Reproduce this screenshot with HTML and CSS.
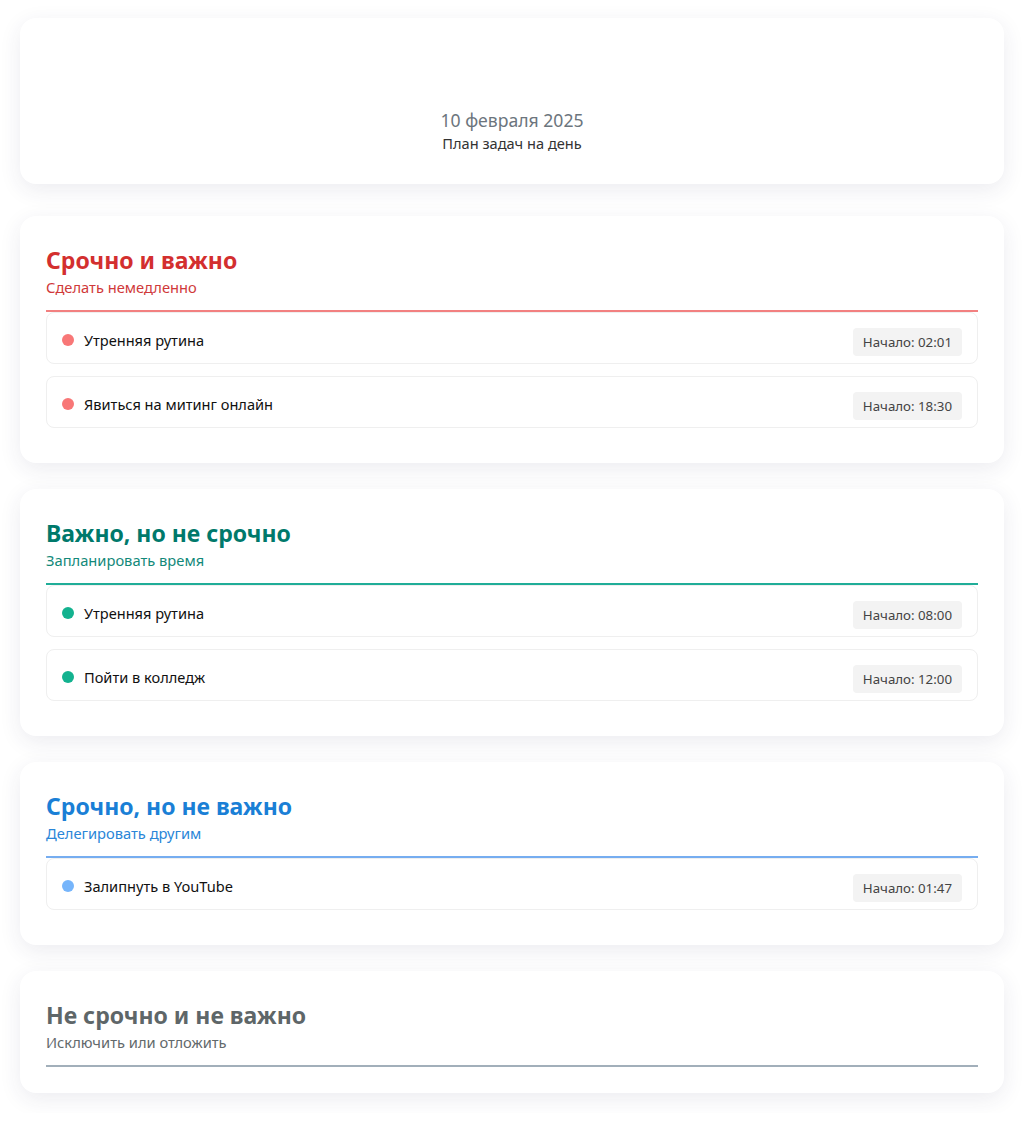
FILE: index.html
```html
<!DOCTYPE html>
<html lang="ru">
<head>
<meta charset="utf-8">
<title>План задач на день</title>
<link rel="stylesheet" href="styles.css">
</head>
<body>
<main class="page">
  <header class="card head">
    <div class="date">10 февраля 2025</div>
    <div class="caption">План задач на день</div>
  </header>

  <section class="card quad red">
    <div class="quad-head">
      <h2 class="quad-title">Срочно и важно</h2>
      <div class="quad-sub">Сделать немедленно</div>
    </div>
    <ul class="tasks">
      <li class="task"><span class="dot"></span><span class="task-name">Утренняя рутина</span><span class="badge">Начало: 02:01</span></li>
      <li class="task"><span class="dot"></span><span class="task-name">Явиться на митинг онлайн</span><span class="badge">Начало: 18:30</span></li>
    </ul>
  </section>

  <section class="card quad teal">
    <div class="quad-head">
      <h2 class="quad-title">Важно, но не срочно</h2>
      <div class="quad-sub">Запланировать время</div>
    </div>
    <ul class="tasks">
      <li class="task"><span class="dot"></span><span class="task-name">Утренняя рутина</span><span class="badge">Начало: 08:00</span></li>
      <li class="task"><span class="dot"></span><span class="task-name">Пойти в колледж</span><span class="badge">Начало: 12:00</span></li>
    </ul>
  </section>

  <section class="card quad blue">
    <div class="quad-head">
      <h2 class="quad-title">Срочно, но не важно</h2>
      <div class="quad-sub">Делегировать другим</div>
    </div>
    <ul class="tasks">
      <li class="task"><span class="dot"></span><span class="task-name">Залипнуть в YouTube</span><span class="badge">Начало: 01:47</span></li>
    </ul>
  </section>

  <section class="card quad gray">
    <div class="quad-head">
      <h2 class="quad-title">Не срочно и не важно</h2>
      <div class="quad-sub">Исключить или отложить</div>
    </div>
  </section>
</main>
</body>
</html>
```

FILE: styles.css
```css
* { box-sizing: border-box; }

body {
  margin: 0;
  background: #ffffff;
  font-family: "Noto Sans", "Open Sans", sans-serif;
  color: #222;
}

.page {
  padding: 18px 20px 20px;
  display: flex;
  flex-direction: column;
  gap: 26px;
}

.card {
  background: #fff;
  border-radius: 16px;
  box-shadow: 0 6px 22px rgba(40, 40, 90, 0.09);
}

.head {
  padding: 90px 20px 30px;
  text-align: center;
  margin-bottom: 6px;
}

.date {
  font-size: 17.6px;
  color: #6c757d;
  line-height: 24px;
}

.caption {
  font-size: 14.6px;
  color: #333;
  line-height: 22px;
}

.quad {
  padding: 27px 26px 23px;
}

.quad-head {
  padding-bottom: 13px;
  border-bottom: 2px solid;
}

.quad-title {
  margin: 0;
  font-size: 23px;
  font-weight: 700;
  line-height: 34px;
}

.quad-sub {
  font-size: 14.7px;
  line-height: 20px;
}

.gray { padding-bottom: 26px; }

.red .quad-title { color: #d32f2f; }
.red .quad-sub { color: #d0393a; }
.red .quad-head { border-color: #f28080; }
.red .dot { background: #f87777; }

.teal .quad-title { color: #00796b; }
.teal .quad-sub { color: #13897a; }
.teal .quad-head { border-color: #20ad98; }
.teal .dot { background: #13b28f; }

.blue .quad-title { color: #1a7fd6; }
.blue .quad-sub { color: #2a86d8; }
.blue .quad-head { border-color: #76adf0; }
.blue .dot { background: #76b5fb; }

.gray .quad-title { color: #5e6668; }
.gray .quad-sub { color: #62696b; }
.gray .quad-head { border-color: #a2afba; }

.tasks {
  list-style: none;
  margin: 0;
  padding: 0;
}

.task {
  display: flex;
  align-items: center;
  height: 52px;
  padding: 4px 15px 0;
  border: 1px solid #efefef;
  border-radius: 8px;
  margin-bottom: 12px;
}

.dot {
  width: 12px;
  height: 12px;
  border-radius: 50%;
  flex: none;
  margin-right: 10px;
}

.task-name {
  flex: 1;
  font-size: 14.6px;
  color: #111;
}

.badge {
  margin-top: 4px;
  background: #f3f3f3;
  color: #444;
  font-size: 13.3px;
  line-height: 28px;
  padding: 0 10px;
  border-radius: 4px;
}
```
